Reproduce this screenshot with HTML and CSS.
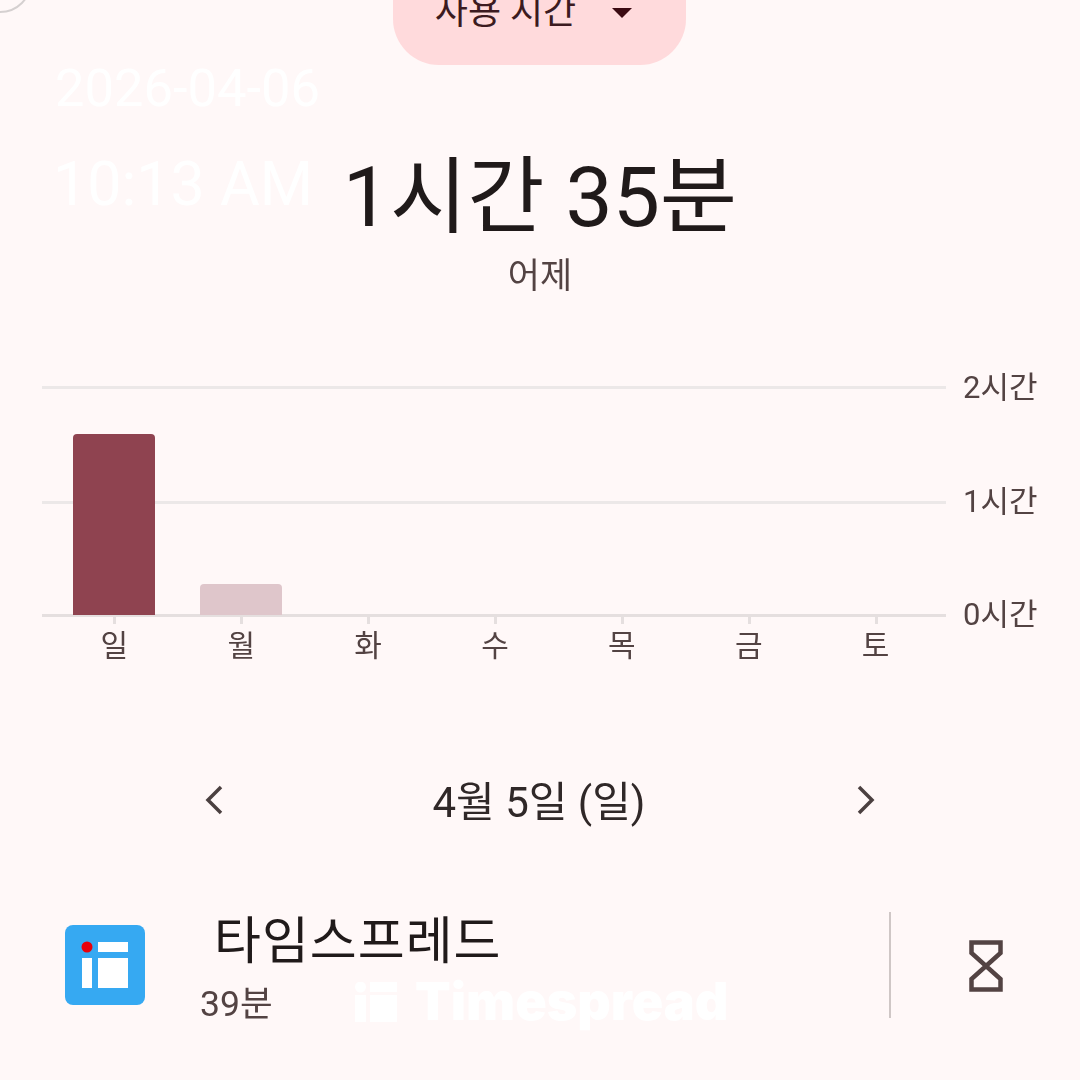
FILE: index.html
```html
<!DOCTYPE html>
<html lang="ko">
<head>
<meta charset="utf-8">
<title>사용 시간</title>
<link rel="stylesheet" href="styles.css">
</head>
<body>
<main class="screen">
  <div class="back-circle"></div>
  <div class="wm wm-date">2026-04-06</div>
  <div class="wm wm-time">10:13 AM</div>

  <header class="head">
    <div class="pill">
      <span class="pill-label">사용 시간</span>
      <svg class="pill-caret" width="20" height="10" viewBox="0 0 20 10"><path d="M0 0H20L10 10Z"/></svg>
    </div>
    <div class="total">1시간 35분</div>
    <div class="sub">어제</div>
  </header>

  <section class="chart">
    <div class="plot">
      <div class="grid-line gl-2"></div>
      <div class="grid-line gl-1"></div>
      <div class="grid-line gl-0"></div>
      <div class="bars">
        <div class="col"><div class="bar bar-on"></div></div>
        <div class="col"><div class="bar bar-off"></div></div>
        <div class="col"></div>
        <div class="col"></div>
        <div class="col"></div>
        <div class="col"></div>
        <div class="col"></div>
      </div>
      <div class="days">
        <span class="day">일</span><span class="day">월</span><span class="day">화</span><span class="day">수</span><span class="day">목</span><span class="day">금</span><span class="day">토</span>
      </div>
    </div>
    <div class="y-labels">
      <span class="y y2">2시간</span>
      <span class="y y1">1시간</span>
      <span class="y y0">0시간</span>
    </div>
  </section>

  <nav class="date-nav">
    <svg class="chev" width="20" height="32" viewBox="0 0 20 32"><path d="M17 3 L4 16 L17 29"/></svg>
    <span class="date-text">4월 5일 (일)</span>
    <svg class="chev" width="20" height="32" viewBox="0 0 20 32"><path d="M3 3 L16 16 L3 29"/></svg>
  </nav>

  <section class="app-row">
    <svg class="app-icon" width="80" height="80" viewBox="0 0 80 80">
      <rect width="80" height="80" rx="8" fill="#36a9f2"/>
      <rect x="33" y="17" width="30" height="10" fill="#fff"/>
      <rect x="17" y="33" width="10" height="30" fill="#fff"/>
      <rect x="33" y="33" width="30" height="30" fill="#fff"/>
      <circle cx="22" cy="22" r="5.500" fill="#e8000b"/>
    </svg>
    <div class="app-text">
      <div class="app-name">타임스프레드</div>
      <div class="app-time">39분</div>
    </div>
    <div class="divider"></div>
    <svg class="hourglass" width="36" height="56" viewBox="0 0 36 56">
      <path d="M3.500 4.500H32.500V15L3.500 41V51.500H32.500V41L3.500 15Z"/>
    </svg>
  </section>

  <div class="wm-brand">
    <svg class="wm-logo" width="42" height="40" viewBox="0 0 42 40"><circle cx="5.500" cy="5" r="5.500"/><path d="M15 0H42V10H15ZM0 13H11V40H0ZM15 13H42V40H15Z"/></svg>
    <span class="wm-brand-text">Timespread</span>
  </div>
</main>
</body>
</html>
```
FILE: styles.css
```css
* { box-sizing: border-box; }
html, body { margin: 0; padding: 0; }
body {
  width: 1080px;
  height: 1080px;
  overflow: hidden;
  background: #fff8f8;
  font-family: Roboto, "Noto Sans CJK KR", sans-serif;
}
.screen { position: relative; width: 1080px; height: 1080px; overflow: hidden; filter: blur(0.5px); }

.back-circle {
  position: absolute;
  left: -32px; top: -51px;
  width: 64px; height: 64px;
  border-radius: 50%;
  border: 2px solid #d5d0d0;
}
.wm { position: absolute; color: #fff; white-space: nowrap; line-height: 1; }
.wm-date { left: 55px; top: 62px; font-size: 52.500px; }
.wm-time { left: 53px; top: 154px; font-size: 61px; }

.head { display: flex; flex-direction: column; align-items: center; }
.pill {
  width: 293px;
  height: 85px;
  margin-top: -20px;
  margin-right: 1px;
  border-radius: 0 0 46px 46px;
  background: #ffdadc;
  display: flex;
  align-items: center;
  justify-content: center;
  gap: 36px;
  padding: 0 12px 30px 0;
}
.pill-label { font-size: 36px; color: #3c1a20; white-space: nowrap; }
.pill-caret { fill: #3b0a12; margin-top: 10px; }
.total {
  margin-top: 83px;
  font-size: 84px;
  line-height: 100px;
  color: #201a1a;
}
.sub {
  margin-top: 6px;
  font-size: 35px;
  line-height: 46px;
  color: #534343;
}

.chart {
  margin: 86px 0 0 42px;
  display: flex;
  align-items: flex-start;
}
.plot { position: relative; width: 904px; height: 280px; }
.grid-line { position: absolute; left: 0; right: 0; height: 3px; background: #ece8e8; }
.gl-2 { top: 0; }
.gl-1 { top: 115px; }
.gl-0 { top: 228px; background: #e5dfdf; }
.bars {
  position: absolute;
  left: 9px; right: 7px; top: 0; height: 229px;
  display: grid;
  grid-template-columns: repeat(7, 1fr);
}
.col {
  position: relative;
  display: flex;
  justify-content: center;
  align-items: flex-end;
}
.col::after {
  content: "";
  position: absolute;
  left: 50%;
  bottom: -9px;
  width: 3px;
  height: 9px;
  margin-left: -1px;
  background: #e5dfdf;
}
.bar { width: 82px; border-radius: 4px 4px 0 0; }
.bar-on { height: 181px; background: #8f4350; }
.bar-off { height: 31px; background: #dfc6cb; }
.days {
  position: absolute;
  left: 9px; right: 7px; top: 240px;
  display: grid;
  grid-template-columns: repeat(7, 1fr);
  text-align: center;
}
.day { font-size: 30px; line-height: 40px; color: #534343; }
.y-labels { position: relative; width: 134px; height: 280px; }
.y {
  position: absolute;
  left: 17px;
  font-size: 31px;
  line-height: 40px;
  color: #534343;
  white-space: nowrap;
}
.y2 { top: -18px; }
.y1 { top: 96px; }
.y0 { top: 209px; }

.date-nav {
  margin: 102px auto 0;
  width: 672px;
  display: flex;
  align-items: center;
  justify-content: space-between;
  height: 60px;
}
.chev { fill: none; stroke: #4b4040; stroke-width: 3.500; margin-top: 3px; }
.date-text { font-size: 42px; color: #302828; margin-left: -2px; }

.app-row {
  margin-top: 84px;
  display: flex;
  align-items: center;
  height: 106px;
  padding-left: 65px;
}
.app-icon { flex: none; margin-top: -1px; }
.app-text { margin-left: 55px; width: 689px; padding-top: 10px; }
.app-name { font-size: 51px; line-height: 56px; color: #201a1a; padding-left: 14px; letter-spacing: 1px; white-space: nowrap; }
.app-time { margin-top: 12px; font-size: 35.500px; line-height: 44px; color: #534343; }
.divider { width: 2px; height: 106px; background: #cfc7c6; }
.hourglass { margin-left: 77px; margin-top: 2px; fill: none; stroke: #534343; stroke-width: 4.500; }

.wm-brand {
  position: absolute;
  left: 355px; top: 982px;
  display: flex;
  align-items: center;
  gap: 18px;
}
.wm-logo { fill: #fff; }
.wm-brand-text { font-size: 52px; font-weight: 900; color: #fff; font-family: Inter, Roboto, sans-serif; line-height: 40px; }
```
